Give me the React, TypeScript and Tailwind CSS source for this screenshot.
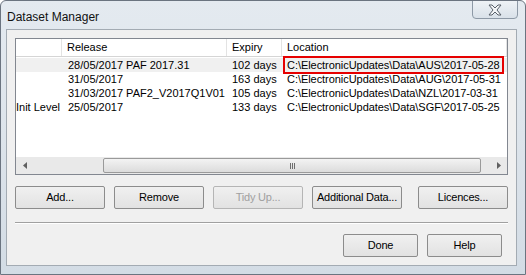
import React from 'react';

const FONT = { fontFamily: '"Liberation Sans", Arial, sans-serif' };

const rows = [
  { level: '', release: '28/05/2017 PAF 2017.31', expiry: '102 days', location: 'C:\\ElectronicUpdates\\Data\\AUS\\2017-05-28', selected: true },
  { level: '', release: '31/05/2017', expiry: '163 days', location: 'C:\\ElectronicUpdates\\Data\\AUG\\2017-05-31' },
  { level: '', release: '31/03/2017 PAF2_V2017Q1V01', expiry: '105 days', location: 'C:\\ElectronicUpdates\\Data\\NZL\\2017-03-31' },
  { level: 'Init Level', release: '25/05/2017', expiry: '133 days', location: 'C:\\ElectronicUpdates\\Data\\SGF\\2017-05-25' },
];

function Btn({ label, disabled, w = 'w-[90px]' }: { label: string; disabled?: boolean; w?: string }) {
  return (
    <div
      className={`${w} h-[23px] flex items-center justify-center rounded-[2px] border bg-gradient-to-b from-[#f0f0f0] to-[#e2e2e2] text-[11px] tracking-[-0.2px] ${
        disabled ? 'text-[#a0a0a0] border-[#b5b5b5]' : 'text-black border-[#8c8c8c]'
      }`}
    >
      {label}
    </div>
  );
}

function CloseIcon() {
  return (
    <svg width="14" height="12" viewBox="0 0 14 12">
      <path
        d="M1 1 H4 L7 4 L10 1 H13 L9 6 L13 11 H10 L7 8 L4 11 H1 L5 6 Z"
        fill="#f4f6f8"
        stroke="#58606a"
        strokeWidth="1"
        strokeLinejoin="round"
      />
    </svg>
  );
}

export default function App() {
  return (
    <div
      className="w-[526px] h-[275px] overflow-hidden flex flex-col border border-[#6b7480] rounded-t-[6px] bg-gradient-to-b from-[#e4eaf0] via-[#dde4eb] to-[#d3dce5]"
      style={FONT}
    >
      {/* title bar */}
      <div className="h-[28px] flex justify-between shrink-0">
        <div className="pl-[6px] pt-[7px] text-[12px] text-[#111]">Dataset Manager</div>
        <div className="mr-[7px] w-[46px] h-[19px] -mt-px flex items-center justify-center rounded-b-[4px] border border-[#8d99a6] bg-gradient-to-b from-[#eef2f6] to-[#d9e1e9]">
          <CloseIcon />
        </div>
      </div>

      {/* client area */}
      <div className="ml-[5px] mr-[8px] h-[237px] border border-[#a3abb3] bg-[#f0f0f0] flex flex-col pt-[8px] px-[8px]">
        {/* list view */}
        <div className="h-[137px] border border-[#828790] bg-white flex flex-col text-[11px]">
          <div className="h-[18px] flex border-b border-[#d5d5d5] bg-white">
            <div className="w-[46px] border-r border-[#e3e3e3]" />
            <div className="w-[165px] border-r border-[#e3e3e3] pl-[5px] flex items-center">Release</div>
            <div className="w-[55px] border-r border-[#e3e3e3] pl-[5px] flex items-center">Expiry</div>
            <div className="w-[225px] border-r border-[#e3e3e3] pl-[5px] flex items-center">Location</div>
          </div>
          <div className="flex-1 pt-px">
            {rows.map((r) => (
              <div key={r.location} className={`h-[14px] flex items-center ${r.selected ? 'bg-[#f0f0f0]' : ''}`}>
                <div className="w-[46px] whitespace-nowrap overflow-hidden">{r.level}</div>
                <div className="w-[165px] pl-[6px] whitespace-nowrap">{r.release}</div>
                <div className="w-[55px] pl-[5px] whitespace-nowrap">{r.expiry}</div>
                <div className="w-[225px] pl-[2px] whitespace-nowrap tracking-[-0.05px]">
                  <span className={`inline-block px-[3px] ${r.selected ? 'outline-2 outline-[#e60000] -outline-offset-1' : ''}`}>
                    {r.location}
                  </span>
                </div>
              </div>
            ))}
          </div>
          {/* horizontal scrollbar */}
          <div className="h-[17px] flex bg-[#e9e9e9] shrink-0">
            <div className="w-[17px] flex items-center justify-center">
              <svg width="4" height="7" viewBox="0 0 4 7"><path d="M4 0 L0 3.5 L4 7 Z" fill="#606060" /></svg>
            </div>
            <div className="flex-1 flex items-center pl-[70px] pr-[9px]">
              <div className="w-full h-[15px] rounded-[2px] border border-[#9a9a9a] bg-gradient-to-b from-[#f3f3f3] to-[#dcdcdc] flex items-center justify-center">
                <div className="flex gap-[1px]">
                  <div className="w-px h-[6px] bg-[#6e6e6e]" />
                  <div className="w-px h-[6px] bg-[#6e6e6e]" />
                  <div className="w-px h-[6px] bg-[#6e6e6e]" />
                </div>
              </div>
            </div>
            <div className="w-[17px] flex items-center justify-center">
              <svg width="4" height="7" viewBox="0 0 4 7"><path d="M0 0 L4 3.5 L0 7 Z" fill="#606060" /></svg>
            </div>
          </div>
        </div>

        {/* action buttons */}
        <div className="mt-[11px] flex">
          <Btn label="Add..." />
          <div className="ml-[9px]"><Btn label="Remove" /></div>
          <div className="ml-[9px]"><Btn label="Tidy Up..." disabled /></div>
          <div className="ml-[9px]"><Btn label="Additional Data..." /></div>
          <div className="ml-[16px]"><Btn label="Licences..." /></div>
        </div>

        {/* separator */}
        <div className="mt-[13px] h-[2px] border-t border-[#a0a0a0] border-b border-b-white" />

        {/* bottom buttons */}
        <div className="mt-[10px] flex justify-end gap-[9px] pr-[6px]">
          <Btn label="Done" w="w-[75px]" />
          <Btn label="Help" w="w-[75px]" />
        </div>
      </div>
    </div>
  );
}
